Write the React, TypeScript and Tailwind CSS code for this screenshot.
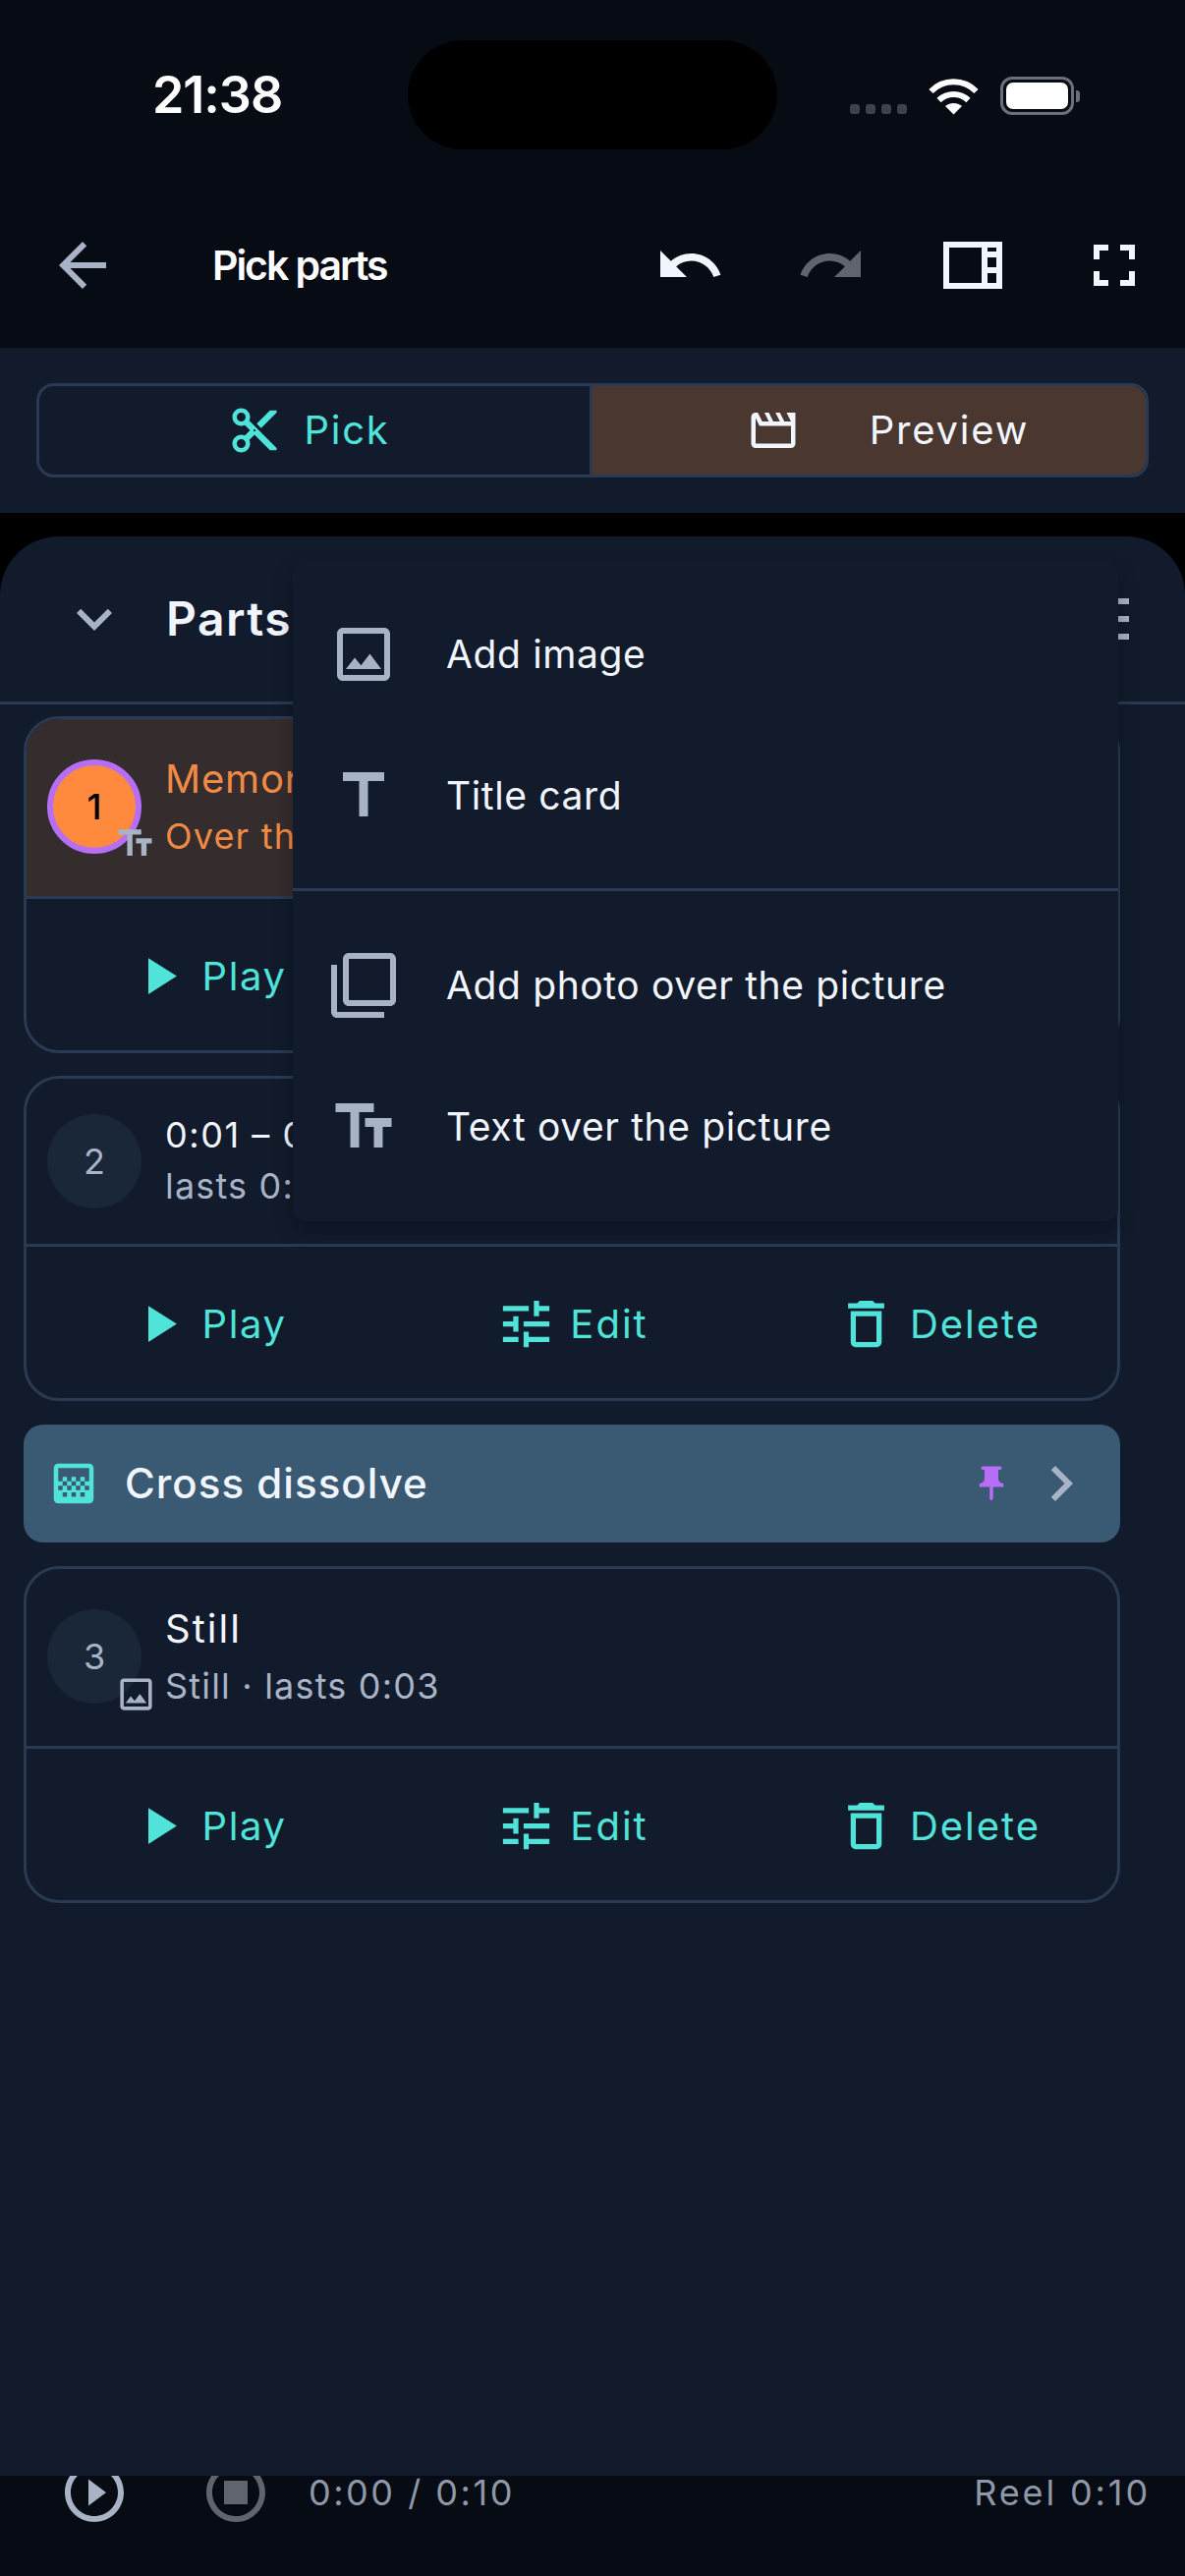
import {
  MdArrowBack,
  MdUndo,
  MdRedo,
  MdFullscreen,
  MdContentCut,
  MdOutlineMovie,
  MdPlayArrow,
  MdTune,
  MdDeleteOutline,
  MdOutlineImage,
  MdTitle,
  MdFilterNone,
  MdTextFields,
  MdExpandMore,
  MdGradient,
  MdPushPin,
  MdChevronRight,
  MdPlayCircleOutline,
  MdOutlineStopCircle,
} from "react-icons/md";

function SidebarIcon({ className }: { className?: string }) {
  return (
    <svg viewBox="0 0 24 24" fill="currentColor" className={className}>
      <path d="M2 4v16h20V4H2zm2 14V6h11v12H4zm16 0h-3v-3.33h3V18zm0-5.33h-3V9.33h3v3.34zm0-5.34h-3V6h3v1.33z" />
    </svg>
  );
}

function StatusBar() {
  return (
    <div className="flex h-[198px] items-start pt-[41px] text-white">
      <div className="ml-[155px] w-[260px] text-[52px] leading-[111px] font-semibold tracking-[-0.02em]">21:38</div>
      <div className="h-[111px] w-[376px] rounded-[56px] bg-black" />
      <div className="ml-[74px] mt-[37px] flex items-end">
        <div className="mb-[1px] flex gap-[6px]">
          <span className="h-[10px] w-[10px] rounded-[3px] bg-[#3d424c]" />
          <span className="h-[10px] w-[10px] rounded-[3px] bg-[#3d424c]" />
          <span className="h-[10px] w-[10px] rounded-[3px] bg-[#3d424c]" />
          <span className="h-[10px] w-[10px] rounded-[3px] bg-[#3d424c]" />
        </div>
        <svg viewBox="0 0 51 38" className="ml-[22px] h-[38px] w-[51px]" fill="none" stroke="white" strokeWidth="6">
          <path d="M2.5 14 C15 1 36 1 48.5 14" />
          <path d="M10.5 23 C19 15 32 15 40.5 23" />
          <path d="M17 29 L25.5 37.5 L34 29 C29 25 22 25 17 29 Z" fill="white" stroke="none" />
        </svg>
        <div className="ml-[22px] flex items-center">
          <div className="h-[39px] w-[75px] rounded-[12px] border-[3px] border-[#6b6f78] p-[3px]">
            <div className="h-full w-full rounded-[7px] bg-white" />
          </div>
          <div className="ml-[2px] h-[12px] w-[4px] rounded-r-[3px] bg-[#6b6f78]" />
        </div>
      </div>
    </div>
  );
}

function Header() {
  return (
    <div className="flex h-[156px] items-start">
      <div className="flex h-[144px] w-[168px] items-center pl-[48px]">
        <MdArrowBack className="h-[72px] w-[72px] text-[#a8b3c6]" />
      </div>
      <div className="ml-[48px] h-[144px] text-[41px] leading-[144px] font-semibold tracking-[-0.05em] text-white">Pick parts</div>
      <div className="ml-auto flex">
        <div className="grid h-[144px] w-[144px] place-items-center">
          <MdUndo className="h-[72px] w-[72px] text-[#f1f5fd]" />
        </div>
        <div className="grid h-[144px] w-[144px] place-items-center">
          <MdRedo className="h-[72px] w-[72px] text-[#5f646d]" />
        </div>
        <div className="grid h-[144px] w-[144px] place-items-center">
          <SidebarIcon className="h-[72px] w-[72px] text-[#f1f5fd]" />
        </div>
        <div className="grid h-[144px] w-[144px] place-items-center">
          <MdFullscreen className="h-[72px] w-[72px] text-[#f1f5fd]" />
        </div>
      </div>
    </div>
  );
}

function ModeSwitch() {
  return (
    <div className="h-[168px] bg-[#111b2b] px-[37px] py-[36px]">
      <div className="flex h-[96px] overflow-hidden rounded-[18px] border-[3px] border-[#2a3a52]">
        <div className="flex w-[560px] items-center justify-center gap-[23px] pr-[11px] text-[#4fe3d9]">
          <MdContentCut className="h-[54px] w-[54px]" />
          <span className="text-[40px] tracking-[0.045em]">Pick</span>
        </div>
        <div className="w-[3px] bg-[#2a3a52]" />
        <div className="flex flex-1 items-center justify-center gap-[71px] bg-[#4a3730] pl-[38px] text-[#f1f5fd]">
          <MdOutlineMovie className="h-[54px] w-[54px]" />
          <span className="text-[40px] tracking-[0.045em]">Preview</span>
        </div>
      </div>
    </div>
  );
}

function Actions() {
  return (
    <div className="grid h-[154px] grid-cols-3 items-center pt-[3px] text-[#4fe3d9]">
      <div className="flex items-center justify-center gap-[13px] pr-[3px]">
        <MdPlayArrow className="h-[63px] w-[63px]" />
        <span className="text-[40px] tracking-[0.04em]">Play</span>
      </div>
      <div className="flex items-center justify-center gap-[13px]">
        <MdTune className="h-[63px] w-[63px]" />
        <span className="text-[40px] tracking-[0.05em]">Edit</span>
      </div>
      <div className="flex items-center justify-center gap-[13px] pl-[5px]">
        <MdDeleteOutline className="h-[63px] w-[63px]" />
        <span className="text-[40px] tracking-[0.05em]">Delete</span>
      </div>
    </div>
  );
}

function PartsCards() {
  return (
    <div className="flex flex-col gap-[24px] pt-[12px] pl-[24px] pr-[66px]">
      <div className="flex flex-col gap-[23px]">
        {/* part 1, selected */}
        <div className="overflow-hidden rounded-[36px] border-[3px] border-[#2a3a52]">
          <div className="flex h-[180px] items-center gap-[24px] bg-[#352c2e] pl-[21px]">
            <div className="relative mb-[3px] grid h-[96px] w-[96px] place-items-center rounded-full border-[6px] border-[#b56ef5] bg-[#ff8a3d] text-[36px] font-medium text-black">
              1
              <MdTextFields className="absolute -right-[21px] -bottom-[17px] h-[43px] w-[43px] text-[#a8b3c6]" />
            </div>
            <div className="tracking-[0.05em] text-[#f08a45]">
              <div className="text-[40px] leading-[58px]">Memories</div>
              <div className="text-[36px] leading-[58px] tracking-[0.033em]">Over the picture</div>
            </div>
          </div>
          <div className="h-[3px] bg-[#2a3a52]" />
          <Actions />
        </div>

        {/* part 2 */}
        <div className="overflow-hidden rounded-[36px] border-[3px] border-[#2a3a52]">
          <div className="flex h-[168px] items-center gap-[24px] pl-[21px]">
            <div className="grid h-[96px] w-[96px] place-items-center rounded-full bg-[#1a2739] text-[36px] text-[#a8b3c6]">2</div>
            <div className="mb-[3px]">
              <div className="text-[36px] leading-[52px] tracking-[0.043em] text-[#f1f5fd]">0:01 – 0:07</div>
              <div className="text-[36px] leading-[52px] tracking-[0.033em] text-[#a8b3c6]">lasts 0:06</div>
            </div>
          </div>
          <div className="h-[3px] bg-[#2a3a52]" />
          <Actions />
        </div>
      </div>

      <div className="flex h-[120px] items-center rounded-[20px] bg-[#3a5a74]">
        <MdGradient className="ml-[24px] h-[54px] w-[54px] text-[#4fe3d9]" />
        <span className="mb-[2px] ml-[25px] text-[42px] font-medium tracking-[0.025em] text-[#f1f5fd]">Cross dissolve</span>
        <MdPushPin className="ml-auto h-[42px] w-[42px] text-[#b56ef5]" />
        <MdChevronRight className="mr-[24px] ml-[14px] h-[72px] w-[72px] text-[#a8b3c6]" />
      </div>

      <div className="overflow-hidden rounded-[36px] border-[3px] border-[#2a3a52]">
        <div className="flex h-[180px] items-center gap-[24px] pl-[21px]">
          <div className="relative mb-[3px] grid h-[96px] w-[96px] place-items-center rounded-full bg-[#1a2739] text-[36px] text-[#a8b3c6]">
            3
            <MdOutlineImage className="absolute -right-[16px] -bottom-[12px] h-[43px] w-[43px] text-[#a8b3c6]" />
          </div>
          <div>
            <div className="text-[40px] leading-[58px] tracking-[0.05em] text-[#f1f5fd]">Still</div>
            <div className="text-[36px] leading-[58px] tracking-[0.033em] text-[#a8b3c6]">Still · lasts 0:03</div>
          </div>
        </div>
        <div className="h-[3px] bg-[#2a3a52]" />
        <Actions />
      </div>
    </div>
  );
}

function AddMenu() {
  return (
    <div className="absolute top-[24px] left-[298px] w-[840px] rounded-[12px] bg-[#111b2b] py-[24px] text-[39px] tracking-[0.016em] text-[#f1f5fd] shadow-[0_8px_20px_rgba(0,0,0,0.28)]">
      <div className="flex h-[144px] items-center pl-[36px]">
        <MdOutlineImage className="h-[72px] w-[72px] text-[#a8b3c6]" />
        <span className="ml-[48px]">Add image</span>
      </div>
      <div className="flex h-[144px] items-center pl-[36px]">
        <MdTitle className="h-[72px] w-[72px] text-[#a8b3c6]" />
        <span className="ml-[48px]">Title card</span>
      </div>
      <div className="mt-[22px] mb-[24px] h-[3px] bg-[#2a3a52]" />
      <div className="flex h-[144px] items-center pl-[36px]">
        <MdFilterNone className="h-[72px] w-[72px] text-[#a8b3c6]" />
        <span className="ml-[48px]">Add photo over the picture</span>
      </div>
      <div className="flex h-[144px] items-center pl-[36px]">
        <MdTextFields className="h-[72px] w-[72px] text-[#a8b3c6]" />
        <span className="ml-[48px]">Text over the picture</span>
      </div>
    </div>
  );
}

function Sheet() {
  return (
    <div className="relative z-10 flex-1 rounded-t-[60px] bg-[#111b2b]">
      <div className="flex h-[171px] items-center border-b-[3px] border-[#2a3a52]">
        <MdExpandMore className="ml-[60px] h-[72px] w-[72px] text-[#a8b3c6]" />
        <span className="ml-[37px] text-[48px] font-semibold tracking-[0.03em] text-[#f1f5fd]">Parts</span>
        <div className="ml-auto mr-[57px] flex flex-col gap-[12px]">
          <span className="h-[6px] w-[11px] bg-[#a8b3c6]" />
          <span className="h-[6px] w-[11px] bg-[#a8b3c6]" />
          <span className="h-[6px] w-[11px] bg-[#a8b3c6]" />
        </div>
      </div>
      <PartsCards />
      <AddMenu />
    </div>
  );
}

function Transport() {
  return (
    <div className="h-[102px] bg-[#070b13]">
      <div className="-mt-[55px] flex h-[144px] items-center pl-[24px] pr-[35px] text-[36px] text-[#8f98a8]">
        <div className="grid h-[144px] w-[144px] place-items-center">
          <MdPlayCircleOutline className="h-[72px] w-[72px] text-[#a8b3c6]" />
        </div>
        <div className="grid h-[144px] w-[144px] place-items-center">
          <MdOutlineStopCircle className="h-[72px] w-[72px] text-[#5f646d]" />
        </div>
        <span className="ml-[2px] tracking-[0.07em]">0:00 / 0:10</span>
        <span className="ml-auto tracking-[0.08em]">Reel 0:10</span>
      </div>
    </div>
  );
}

export default function App() {
  return (
    <div className="flex h-[2622px] w-[1206px] flex-col overflow-hidden bg-black [font-family:Inter,sans-serif]">
      <div className="bg-[#070b13]">
        <StatusBar />
        <Header />
      </div>
      <ModeSwitch />
      <div className="h-[24px] bg-black" />
      <Sheet />
      <Transport />
    </div>
  );
}
